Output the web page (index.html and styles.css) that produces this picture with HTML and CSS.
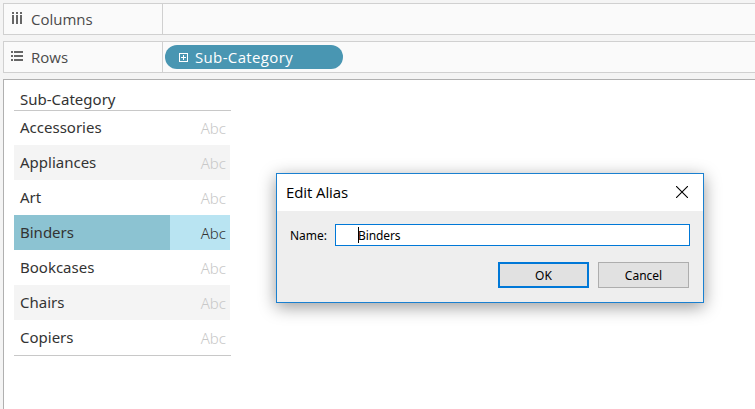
FILE: index.html
```html
<!DOCTYPE html>
<html lang="en">
<head>
  <meta charset="UTF-8">
  <title>Edit Alias</title>
  <link rel="stylesheet" href="styles.css">
</head>
<body>

<div class="shelf">
  <div class="shelf-label">
    <svg class="columns-icon" width="12" height="12" viewBox="0 0 12 12" fill="#666" shape-rendering="crispEdges">
      <path d="M1 0h2v2H1zM5 0h2v2H5zM9 0h2v2H9zM1 3h2v9H1zM5 3h2v9H5zM9 3h2v9H9z"/>
    </svg>
    <span>Columns</span>
  </div>
</div>

<div class="shelf">
  <div class="shelf-label">
    <svg width="12" height="12" viewBox="0 0 12 12" fill="#666" shape-rendering="crispEdges">
      <path d="M0 0h2v2H0zM3 0h9v2H3zM0 4h2v2H0zM3 4h9v2H3zM0 8h2v2H0zM3 8h9v2H3z"/>
    </svg>
    <span>Rows</span>
  </div>
  <div class="pill">
    <svg width="9" height="9" viewBox="0 0 9 9" fill="none" stroke="#fff" shape-rendering="crispEdges">
      <path d="M.5 .5h8v8h-8zM2 4.5h5M4.5 2v5"/>
    </svg>
    <span>Sub-Category</span>
  </div>
</div>

<div class="view">
  <div class="table">
    <div class="table-header">Sub-Category</div>
    <div class="row"><span class="name">Accessories</span><span class="mark">Abc</span></div>
    <div class="row"><span class="name">Appliances</span><span class="mark">Abc</span></div>
    <div class="row"><span class="name">Art</span><span class="mark">Abc</span></div>
    <div class="row selected"><span class="name">Binders</span><span class="mark">Abc</span></div>
    <div class="row"><span class="name">Bookcases</span><span class="mark">Abc</span></div>
    <div class="row"><span class="name">Chairs</span><span class="mark">Abc</span></div>
    <div class="row"><span class="name">Copiers</span><span class="mark">Abc</span></div>
  </div>
</div>

<div class="dialog">
  <div class="title-bar">
    <span>Edit Alias</span>
    <svg width="12" height="12" viewBox="0 0 12 12" fill="none" stroke="#000" stroke-width="1.1">
      <path d="M0 0l12 12M12 0l-12 12"/>
    </svg>
  </div>
  <div class="field">
    <span class="field-label">Name:</span>
    <div class="input"><span class="caret"></span><span class="value">Binders</span></div>
  </div>
  <div class="buttons">
    <button class="ok">OK</button>
    <button>Cancel</button>
  </div>
</div>

</body>
</html>
```

FILE: styles.css
```css
* {
  box-sizing: border-box;
}

html, body {
  margin: 0;
  padding: 0;
  height: 100%;
  overflow: hidden;
  background: #f4f4f4;
  font-family: "Noto Sans", "Open Sans", sans-serif;
}

body {
  padding: 3px 0 0 3px;
}

.shelf {
  display: flex;
  height: 32px;
  margin-bottom: 6px;
  border: 1px solid #d0d0d0;
  border-right: 0;
  background: #fafafa;
}

.shelf-label {
  display: flex;
  align-items: center;
  width: 159px;
  padding-left: 7px;
  gap: 8px;
  border-right: 1px solid #d0d0d0;
  font-family: "Open Sans", sans-serif;
  font-size: 15px;
  color: #4a4a4a;
}

.columns-icon {
  margin-bottom: 2px;
}

.pill {
  display: flex;
  align-items: center;
  width: 178px;
  height: 24px;
  margin: 3px 0 0 2px;
  padding-left: 14px;
  gap: 7px;
  border-radius: 12px;
  background: #4996b2;
  color: #fff;
  font-family: "Open Sans", sans-serif;
  font-size: 15px;
  font-weight: 500;
  letter-spacing: 0.35px;
}

.view {
  height: 340px;
  padding: 10px 0 0 10px;
  border: 1px solid #b0b0b0;
  border-right: 0;
  background: #fff;
}

.table {
  width: 217px;
  border-bottom: 1px solid #c8c8c8;
  font-size: 15px;
  color: #333;
}

.table-header {
  height: 21px;
  padding-left: 6px;
  border-bottom: 1px solid #c8c8c8;
  line-height: 19px;
}

.row {
  display: flex;
  width: 216px;
  height: 35px;
  line-height: 35px;
}

.row:nth-child(2) {
  height: 34px;
  line-height: 33px;
}

.row:nth-child(odd) {
  background: #f4f4f4;
}

.name {
  width: 156px;
  padding-left: 6px;
}

.mark {
  flex: 1;
  padding: 1px 4px 0 0;
  text-align: right;
  font-weight: 300;
  color: #c8c8c8;
}

.row.selected {
  background: #b9e4f2;
}

.selected .name {
  background: #8cc3d2;
}

.selected .mark {
  color: #333;
}

.dialog {
  position: absolute;
  left: 276px;
  top: 173px;
  width: 428px;
  height: 130px;
  border: 1px solid #1a80d0;
  background: #eee;
  box-shadow: 0 4px 16px rgba(0, 0, 0, 0.4);
  font-size: 12px;
  color: #000;
}

.title-bar {
  display: flex;
  align-items: center;
  justify-content: space-between;
  height: 37px;
  padding: 0 15px 2px 9px;
  background: #fff;
  font-family: "Open Sans", sans-serif;
  font-size: 15px;
  letter-spacing: -0.1px;
}

.field {
  display: flex;
  align-items: center;
  margin: 13px 13px 0;
}

.field-label {
  width: 45px;
}

.input {
  display: flex;
  align-items: center;
  flex: 1;
  height: 22px;
  padding-left: 22px;
  border: 1px solid #0078d7;
  background: #fff;
}

.caret {
  width: 1px;
  height: 16px;
  background: #000;
}

.value {
  margin-left: -1px;
  letter-spacing: -0.1px;
}

.buttons {
  display: flex;
  justify-content: flex-end;
  gap: 9px;
  margin: 16px 14px 0;
}

.buttons button {
  width: 91px;
  height: 26px;
  padding: 0;
  border: 1px solid #adadad;
  background: #e1e1e1;
  font-family: inherit;
  font-size: 12px;
  color: #000;
}

.buttons .ok {
  border: 2px solid #0078d7;
}
```
